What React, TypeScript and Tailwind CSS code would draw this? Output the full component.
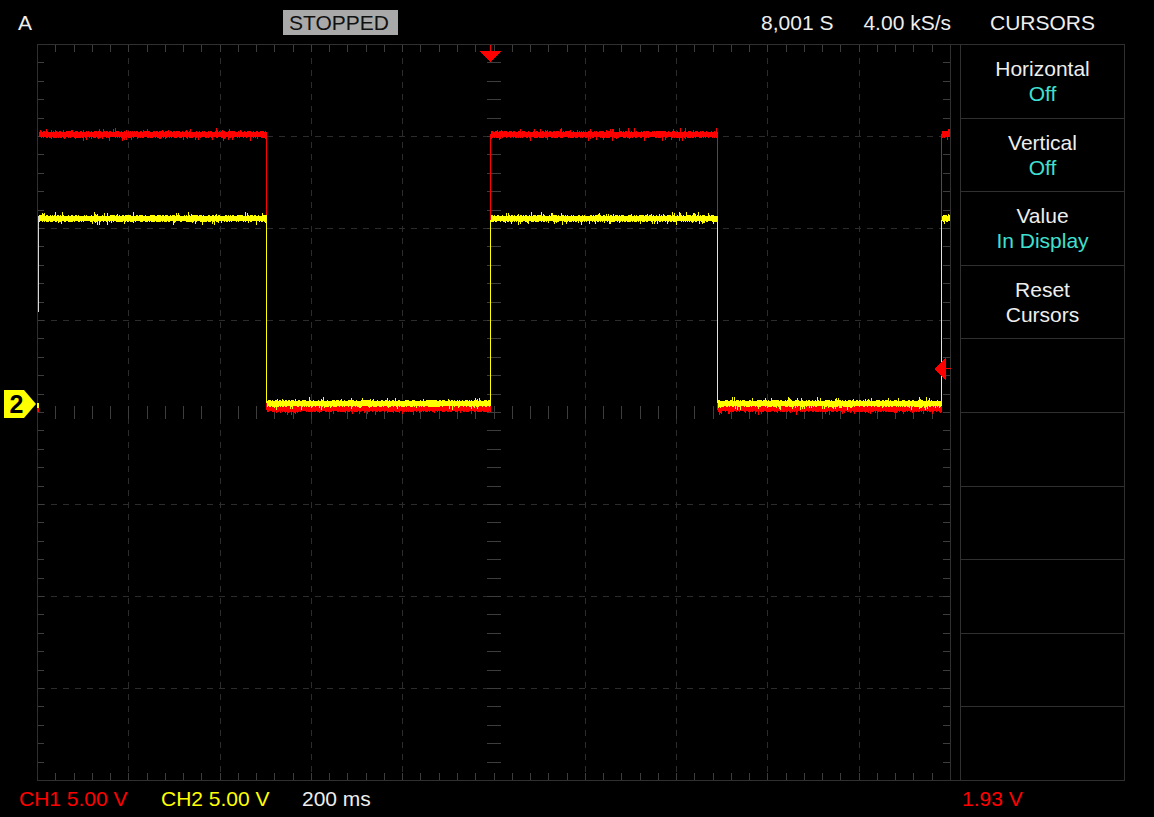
import React from "react";

function mulberry32(a: number) {
  return function () {
    a |= 0;
    a = (a + 0x6d2b79f5) | 0;
    let t = Math.imul(a ^ (a >>> 15), 1 | a);
    t = (t + Math.imul(t ^ (t >>> 7), 61 | t)) ^ t;
    return ((t ^ (t >>> 14)) >>> 0) / 4294967296;
  };
}

function noisePath(x0: number, x1: number, c: number, seed: number) {
  const r = mulberry32(seed);
  let d = "";
  for (let x = x0; x <= x1; x++) {
    let top = c - 2;
    let bot = c + 2;
    if (r() < 0.5) top -= 1;
    if (r() < 0.5) bot += 1;
    if (r() < 0.12) top -= 1 + Math.floor(r() * 3);
    if (r() < 0.14) bot += 1 + Math.floor(r() * 3);
    d += `M${x + 0.5} ${top}V${bot + 1}`;
  }
  return d;
}

const W = 914;
const H = 737;
const DX = 913 / 10;
const DY = 736 / 8;

function Grid() {
  const border = "#303030";
  const dash = "#2c2c2c";
  const tick = "#3d3d3d";
  const els: React.ReactNode[] = [];
  for (let i = 1; i < 10; i++) {
    if (i === 5) continue;
    const x = Math.round(i * DX) + 0.5;
    els.push(<line key={"v" + i} x1={x} y1={0} x2={x} y2={H} stroke={dash} strokeDasharray="6 6" strokeDashoffset={-2} />);
  }
  for (let j = 1; j < 8; j++) {
    if (j === 4) continue;
    const y = Math.round(j * DY) + 0.5;
    els.push(<line key={"h" + j} x1={0} y1={y} x2={W} y2={y} stroke={dash} strokeDasharray="6 6" strokeDashoffset={-2} />);
  }
  for (let k = 1; k < 50; k++) {
    const x = Math.round((k * DX) / 5) + 0.5;
    els.push(<line key={"tt" + k} x1={x} y1={0} x2={x} y2={8} stroke={tick} />);
    els.push(<line key={"tb" + k} x1={x} y1={H - 8} x2={x} y2={H} stroke={tick} />);
    const cy = Math.round(4 * DY);
    els.push(<line key={"tc" + k} x1={x} y1={cy - 6} x2={x} y2={cy + 7} stroke={tick} />);
  }
  for (let k = 1; k < 40; k++) {
    const y = Math.round((k * DY) / 5) + 0.5;
    els.push(<line key={"tl" + k} x1={0} y1={y} x2={7} y2={y} stroke={tick} />);
    els.push(<line key={"tr" + k} x1={W - 8} y1={y} x2={W} y2={y} stroke={tick} />);
    const cx = Math.round(5 * DX);
    els.push(<line key={"tm" + k} x1={cx - 7} y1={y} x2={cx + 7} y2={y} stroke={tick} />);
  }
  els.push(<line key="bl" x1={0.5} y1={0} x2={0.5} y2={H} stroke={border} />);
  els.push(<line key="br" x1={W - 0.5} y1={0} x2={W - 0.5} y2={H} stroke={border} />);
  els.push(<line key="bt" x1={0} y1={0.5} x2={W} y2={0.5} stroke={border} />);
  els.push(<line key="bb" x1={0} y1={H - 0.5} x2={W} y2={H - 0.5} stroke={border} />);
  return <g shapeRendering="crispEdges">{els}</g>;
}

function Traces() {
  const RH = 90;
  const YH = 174;
  const YL = 360;
  const RL = 364;
  const red = "#ff0000";
  const yel = "#ffff00";
  const redD =
    noisePath(2, 229, RH, 11) +
    noisePath(230, 453, RL, 12) +
    noisePath(454, 680, RH, 13) +
    noisePath(681, 904, RL, 14) +
    noisePath(905, 912, RH, 15);
  const yelD =
    noisePath(2, 229, YH, 21) +
    noisePath(230, 453, YL - 1, 22) +
    noisePath(454, 680, YH, 23) +
    noisePath(681, 904, YL - 1, 24) +
    noisePath(905, 912, YH, 25);
  const edges = [229.5, 453.5, 680.5, 904.5];
  return (
    <g shapeRendering="crispEdges">
      <path d={redD} stroke={red} strokeWidth={1} fill="none" />
      {edges.map((x) => (
        <line key={"re" + x} x1={x} y1={RH} x2={x} y2={RL + 2} stroke={red} />
      ))}
      <path d={yelD} stroke={yel} strokeWidth={1} fill="none" />
      {edges.map((x) => (
        <line key={"ye" + x} x1={x} y1={YH + 2} x2={x} y2={YL - 1} stroke={yel} />
      ))}
      <line x1={1.5} y1={172} x2={1.5} y2={268} stroke="#d8d8d8" />
      <rect x={0} y={359} width={2} height={5} fill={yel} />
      <rect x={0} y={364} width={2} height={4} fill={red} />
      <line x1={453.5} y1={1} x2={453.5} y2={8} stroke={red} />
      <polygon points="442,7 465,7 453.5,18" fill={red} />
      <line x1={904} y1={324.5} x2={914} y2={324.5} stroke={red} />
      <polygon points="897,325 909,313 909,336" fill={red} />
    </g>
  );
}

const menu: [string, string, boolean][] = [
  ["Horizontal", "Off", true],
  ["Vertical", "Off", true],
  ["Value", "In Display", true],
  ["Reset", "Cursors", false],
];

export default function App() {
  return (
    <div
      className="w-[1154px] h-[817px] bg-black text-[#eeeeee] text-[21px] leading-[25px] overflow-hidden flex flex-col"
      style={{ fontFamily: '"Liberation Sans", Arial, sans-serif' }}
    >
      <div className="h-[44px] flex shrink-0">
        <div className="w-[951px] flex items-start pt-[10px]">
          <span className="pl-[18px] w-[283px]">A</span>
          <span className="bg-[#a9a9a9] text-[#111111] h-[25px] w-[115px] pl-[6px]">STOPPED</span>
          <span className="flex-1" />
          <span>8,001 S</span>
          <span className="ml-[30px]">4.00 kS/s</span>
        </div>
        <div className="w-[9px]" />
        <div className="w-[165px] text-center pt-[10px]">CURSORS</div>
      </div>

      <div className="h-[737px] flex shrink-0">
        <div className="w-[37px] relative">
          <svg className="absolute left-[4px] top-[346px]" width={33} height={28}>
            <polygon points="0,0 20,0 32,14 20,28 0,28" fill="#ffff00" />
            <text
              x={12.5}
              y={22.5}
              textAnchor="middle"
              fontSize={25}
              fontWeight={700}
              fill="#000"
              style={{ fontFamily: '"Liberation Sans", Arial, sans-serif' }}
            >
              2
            </text>
          </svg>
        </div>
        <svg width={W} height={H} className="block">
          <Grid />
          <Traces />
        </svg>
        <div className="w-[9px] border-y border-[#303030]" />
        <div className="w-[165px] border border-[#303030] flex flex-col">
          {Array.from({ length: 10 }).map((_, i) => {
            const m = menu[i];
            return (
              <div
                key={i}
                className={
                  "flex-1 flex flex-col items-center justify-center " + (i > 0 ? "border-t border-[#303030]" : "")
                }
              >
                {m && (
                  <>
                    <span>{m[0]}</span>
                    <span className={m[2] ? "text-[#40e0d0]" : ""}>{m[1]}</span>
                  </>
                )}
              </div>
            );
          })}
        </div>
      </div>

      <div className="h-[36px] flex pt-[5px] shrink-0">
        <span className="pl-[19px] w-[161px] text-[#ff0000]">CH1 5.00 V</span>
        <span className="w-[141px] text-[#ffff00]">CH2 5.00 V</span>
        <span className="w-[660px]">200 ms</span>
        <span className="text-[#ff0000]">1.93 V</span>
      </div>
    </div>
  );
}
